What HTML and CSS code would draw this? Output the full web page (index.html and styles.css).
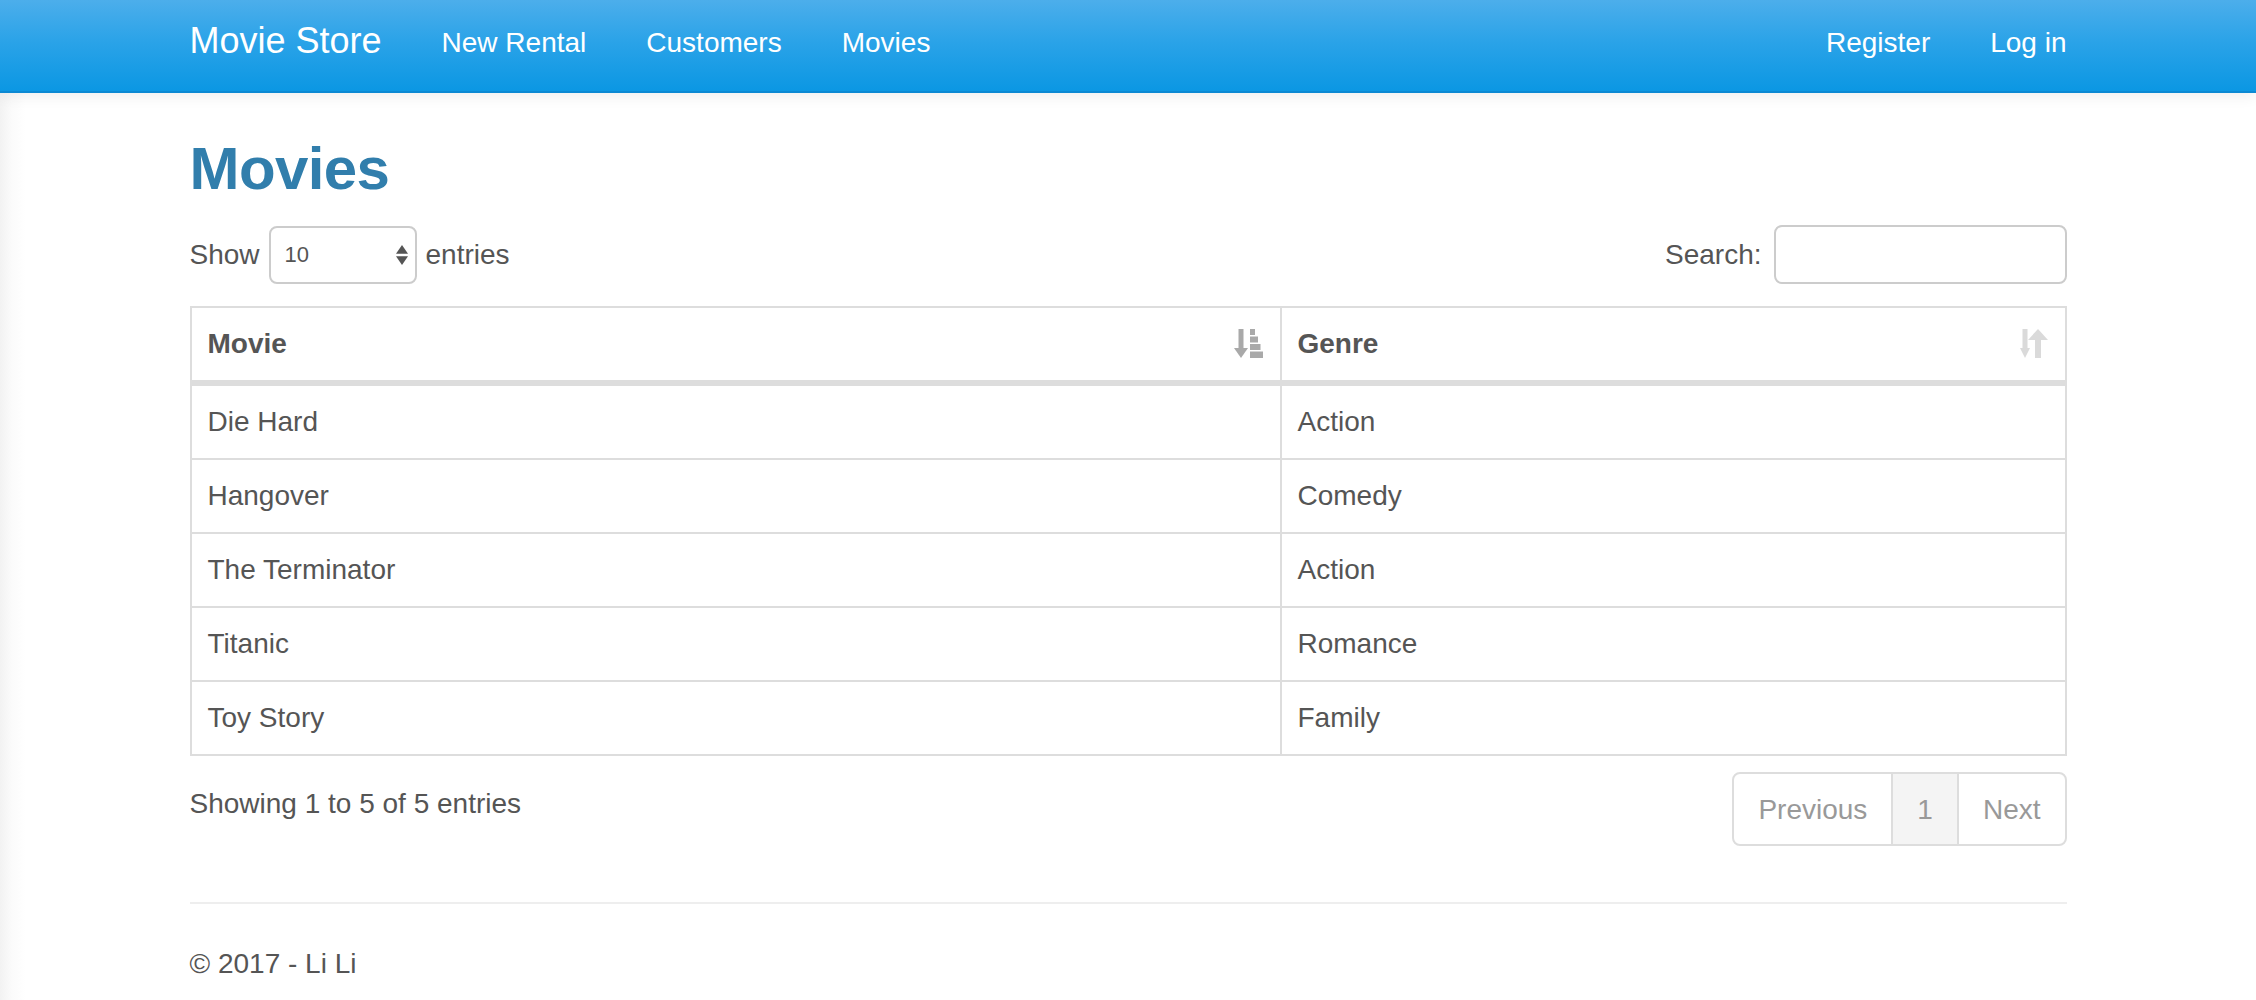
FILE: index.html
```html
<!DOCTYPE html>
<html lang="en">
<head>
<meta charset="utf-8">
<title>Movies - Movie Store</title>
<link rel="stylesheet" href="styles.css">
</head>
<body>
<header class="navbar">
  <div class="container nav-inner">
    <a class="brand" href="#">Movie Store</a>
    <ul class="nav">
      <li><a href="#">New Rental</a></li>
      <li><a href="#">Customers</a></li>
      <li><a href="#">Movies</a></li>
    </ul>
    <ul class="nav nav-right">
      <li><a href="#">Register</a></li>
      <li><a href="#">Log in</a></li>
    </ul>
  </div>
</header>

<main class="container">
  <h1 class="page-title">Movies</h1>

  <div class="dt-top">
    <label class="dt-length">
      <span>Show</span>
      <span class="select-wrap">
        <select class="dt-select">
          <option>10</option>
          <option>25</option>
          <option>50</option>
          <option>100</option>
        </select>
        <svg class="select-arrows" width="12" height="20" viewBox="0 0 12 20"><polygon points="0,8.7 12,8.7 6,0" fill="#555"/><polygon points="0,11.3 12,11.3 6,20" fill="#555"/></svg>
      </span>
      <span>entries</span>
    </label>
    <label class="dt-filter">
      <span>Search:</span>
      <input class="dt-search" type="search">
    </label>
  </div>

  <table class="dt">
    <thead>
      <tr>
        <th class="col-movie">Movie
          <svg class="sort-icon" width="29" height="29" viewBox="0 0 29 29">
            <rect x="4.5" y="0" width="5" height="21" fill="#a9a9a9"/>
            <polygon points="0,19 14,19 7,29" fill="#a9a9a9"/>
            <rect x="16" y="0" width="5" height="6" fill="#a9a9a9"/>
            <rect x="16" y="7.5" width="8" height="6" fill="#a9a9a9"/>
            <rect x="16" y="15" width="10.5" height="6" fill="#a9a9a9"/>
            <rect x="16" y="22.5" width="13" height="6.5" fill="#a9a9a9"/>
          </svg>
        </th>
        <th class="col-genre">Genre
          <svg class="sort-icon" width="28" height="29" viewBox="0 0 28 29">
            <rect x="2.5" y="0" width="5" height="21" fill="#dadada"/>
            <polygon points="0,19 10,19 5,29" fill="#dadada"/>
            <polygon points="8,11 28,11 18,0" fill="#dadada"/>
            <rect x="15" y="9" width="6" height="20" fill="#dadada"/>
          </svg>
        </th>
      </tr>
    </thead>
    <tbody>
      <tr><td>Die Hard</td><td>Action</td></tr>
      <tr><td>Hangover</td><td>Comedy</td></tr>
      <tr><td>The Terminator</td><td>Action</td></tr>
      <tr><td>Titanic</td><td>Romance</td></tr>
      <tr><td>Toy Story</td><td>Family</td></tr>
    </tbody>
  </table>

  <div class="dt-bottom">
    <div class="dt-info">Showing 1 to 5 of 5 entries</div>
    <ul class="pagination">
      <li class="disabled"><a href="#">Previous</a></li>
      <li class="active"><a href="#">1</a></li>
      <li class="disabled"><a href="#">Next</a></li>
    </ul>
  </div>

  <hr class="rule">
  <footer class="site-footer">
    <p>&copy; 2017 - Li Li</p>
  </footer>
</main>
</body>
</html>
```

FILE: styles.css
```css
* {
  box-sizing: border-box;
}

html, body {
  margin: 0;
  padding: 0;
}

body {
  font-family: "Liberation Sans", Arial, Helvetica, sans-serif;
  font-size: 28px;
  line-height: 40px;
  color: #555555;
  background: linear-gradient(to right, #f2f2f2 0, #fbfbfb 12px, #ffffff 26px);
  min-height: 1000px;
}

a {
  text-decoration: none;
}

.container {
  width: 1877px;
  margin: 0 auto;
}

/* Navbar */
.navbar {
  height: 93px;
  background: linear-gradient(#4caeeb 0%, #2ba3e8 45%, #0b97e3 100%);
  border-bottom: 2px solid #0c89d3;
  box-shadow: 0 3px 14px rgba(0, 0, 0, 0.07);
  position: relative;
}

.nav-inner {
  display: flex;
  align-items: flex-start;
  height: 91px;
}

.brand {
  color: #ffffff;
  font-size: 36px;
  line-height: 40px;
  padding: 21px 30px 0 0;
}

.nav {
  display: flex;
  list-style: none;
  margin: 0;
  padding: 0;
}

.nav a {
  display: block;
  color: #ffffff;
  font-size: 28px;
  line-height: 40px;
  padding: 23px 30px 0;
}

.nav-right {
  margin-left: auto;
  margin-right: -30px;
}

/* Page */
main.container {
  padding-top: 43px;
}

.page-title {
  margin: 0;
  font-size: 60px;
  line-height: 66px;
  font-weight: bold;
  letter-spacing: -0.6px;
  color: #317eac;
}

.dt-top {
  margin-top: 23px;
  display: flex;
  justify-content: space-between;
  align-items: center;
  height: 59px;
}

.dt-length,
.dt-filter {
  display: flex;
  align-items: center;
}

.dt-length {
  gap: 9px;
}

.dt-filter {
  gap: 12px;
}

.select-wrap {
  position: relative;
  display: block;
  height: 58px;
}

.dt-select {
  appearance: none;
  -webkit-appearance: none;
  width: 148px;
  height: 58px;
  border: 2px solid #cccccc;
  border-radius: 8px;
  background: #ffffff;
  padding: 0 14px;
  font-family: "Liberation Sans", Arial, sans-serif;
  font-size: 22px;
  color: #555555;
  outline: none;
}

.select-arrows {
  position: absolute;
  right: 9px;
  top: 19px;
  pointer-events: none;
}

.dt-search {
  width: 293px;
  height: 59px;
  border: 2px solid #cccccc;
  border-radius: 8px;
  background: #ffffff;
  font-family: "Liberation Sans", Arial, sans-serif;
  font-size: 28px;
  padding: 0 16px;
  outline: none;
}

/* Table */
.dt {
  margin-top: 22px;
  width: 100%;
  table-layout: fixed;
  border-collapse: separate;
  border-spacing: 0;
  border: 2px solid #dddddd;
}

.dt th,
.dt td {
  padding: 16px;
  text-align: left;
  line-height: 40px;
  font-size: 28px;
  color: #555555;
}

.dt th {
  position: relative;
  font-weight: bold;
  border-bottom: 4px solid #dddddd;
}

.dt td {
  border-top: 2px solid #dddddd;
}

.dt th:first-child,
.dt td:first-child {
  border-right: 2px solid #dddddd;
}

.col-movie {
  width: 1090px;
}

.sort-icon {
  position: absolute;
  right: 17px;
  top: 21px;
}

/* Bottom */
.dt-bottom {
  margin-top: 16px;
  display: flex;
  justify-content: space-between;
  align-items: flex-start;
}

.dt-info {
  padding-top: 12px;
}

.pagination {
  display: flex;
  list-style: none;
  margin: 0;
  padding: 0;
}

.pagination a {
  display: block;
  padding: 16px 24px 14px;
  line-height: 40px;
  font-size: 28px;
  color: #999999;
  background: #ffffff;
  border: 2px solid #dddddd;
}

.pagination li + li a {
  margin-left: -2px;
}

.pagination li:first-child a {
  border-radius: 8px 0 0 8px;
}

.pagination li:last-child a {
  border-radius: 0 8px 8px 0;
}

.pagination .active a {
  background: #f4f4f4;
  color: #999999;
}

.rule {
  margin: 56px 0 40px;
  border: 0;
  border-top: 2px solid #eeeeee;
  height: 0;
}

.site-footer p {
  margin: 0;
}
```
